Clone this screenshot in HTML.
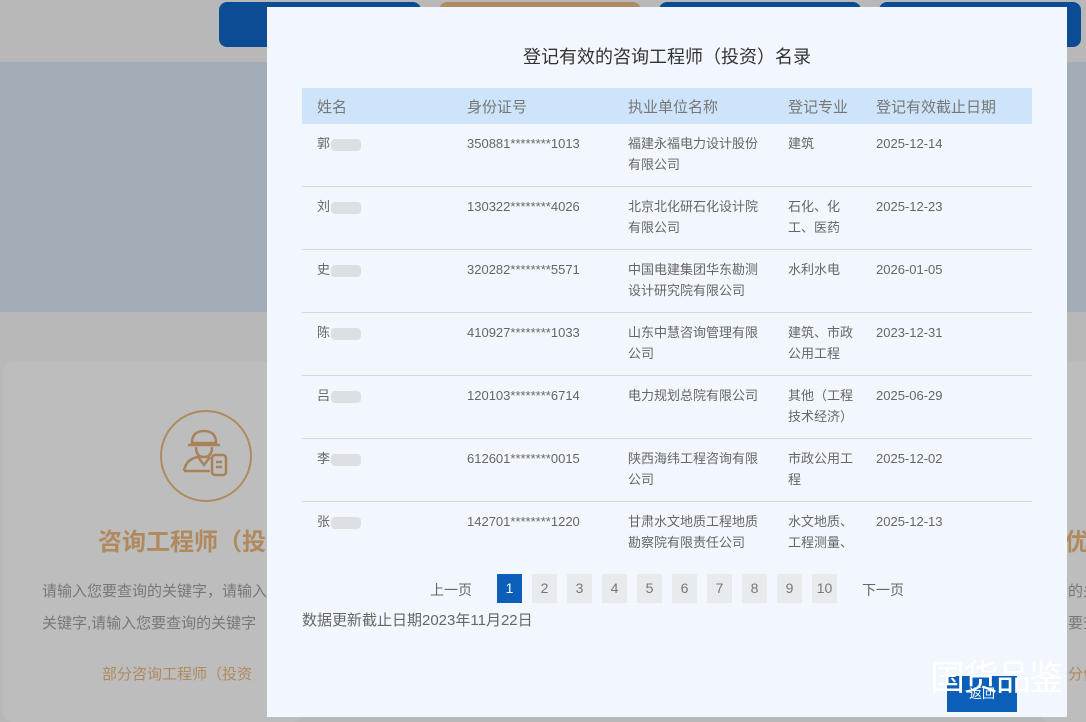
<!DOCTYPE html>
<html><head><meta charset="utf-8"><style>
*{margin:0;padding:0;box-sizing:border-box}
body{width:1086px;height:712px;overflow:hidden;position:relative;background:#b8b8b8;font-family:"Liberation Sans","Noto Sans CJK SC",sans-serif}
.abs{position:absolute}
.btn{position:absolute;top:2px;height:45px;width:202px;border-radius:8px;background:#0b4c94}
.card{position:absolute;top:362px;height:360px;background:#bdbdbd;border-radius:10px}
.modal{position:absolute;left:267px;top:7px;width:800px;height:710px;background:#f1f7fd}
.title{position:absolute;top:36px;left:0;width:100%;text-align:center;font-size:18px;color:#333}
.thead{position:absolute;left:35px;top:81px;width:730px;height:36px;background:#cde4fa;color:#777;font-size:15px}
.thead span,.row span{position:absolute}
.row{position:absolute;left:35px;width:730px;height:63px;border-bottom:1px solid #d6d9dc;color:#666;font-size:13px;line-height:21px;overflow:hidden}
.c1{left:15px}.c2{left:165px}.c3{left:326px;width:134px}.c4{left:486px;width:70px}.c5{left:574px}
.thead span{top:8px;width:auto;white-space:nowrap}
.row span{top:9px}
.blur{display:inline-block;width:30px;height:12px;background:#dcdfe3;vertical-align:middle;border-radius:4px;margin-left:1px}
.pg{position:absolute;top:567px;height:29px;width:25px;background:#e8ebee;color:#777;font-size:14px;text-align:center;line-height:29px}
.nw{white-space:nowrap;overflow:hidden}
</style></head><body>
<div class="abs" style="left:0;top:62px;width:1086px;height:250px;background:#a3adb8"></div>
<div class="btn" style="left:219px"></div>
<div class="btn" style="left:439px;background:#b08a62"></div>
<div class="btn" style="left:659px"></div>
<div class="btn" style="left:879px"></div>
<div class="card" style="left:3px;width:300px"></div>
<div class="card" style="left:1040px;width:60px"></div>
<div class="abs" style="left:160px;top:410px;width:92px;height:92px;border:2px solid #b08a5e;border-radius:50%"></div>
<svg class="abs" style="left:180px;top:425px" width="52" height="55" viewBox="0 0 52 55" fill="none" stroke="#a8835a" stroke-width="2.5"><path d="M12 18 Q12 6 24 6 Q36 6 36 18 Z M8 20 H40 M16 22 Q16 32 24 32 Q32 32 32 22 M4 46 Q6 34 18 32 L24 40 L30 32 M4 46 H30"/><rect x="32" y="30" width="14" height="20" rx="3"/><path d="M36 37h6M36 42h6"/></svg>
<div class="abs nw" style="left:98px;top:522px;font-size:24px;font-weight:bold;color:#b08a5e">咨询工程师（投</div>
<div class="abs nw" style="left:42px;top:576px;font-size:15px;color:#777;line-height:32px;width:225px">请输入您要查询的关键字，请输入<br>关键字,请输入您要查询的关键字</div>
<div class="abs nw" style="left:102px;top:663px;font-size:15px;color:#b08a5e">部分咨询工程师（投资</div>
<div class="abs nw" style="left:1065px;top:522px;font-size:24px;font-weight:bold;color:#b08a5e;width:21px">优</div>
<div class="abs nw" style="left:1068px;top:576px;font-size:15px;color:#777;line-height:32px;width:18px">的关<br>要查</div>
<div class="abs nw" style="left:1068px;top:663px;font-size:15px;color:#b08a5e;width:18px">分优</div>
<div class="modal">
<div class="title">登记有效的咨询工程师（投资）名录</div>
<div class="thead"><span class="c1">姓名</span><span class="c2">身份证号</span><span class="c3">执业单位名称</span><span class="c4">登记专业</span><span class="c5">登记有效截止日期</span></div>
<div class="row" style="top:117px"><span class="c1">郭<i class="blur"></i></span><span class="c2">350881********1013</span><span class="c3">福建永福电力设计股份有限公司</span><span class="c4">建筑</span><span class="c5">2025-12-14</span></div>
<div class="row" style="top:180px"><span class="c1">刘<i class="blur"></i></span><span class="c2">130322********4026</span><span class="c3">北京北化研石化设计院有限公司</span><span class="c4">石化、化工、医药</span><span class="c5">2025-12-23</span></div>
<div class="row" style="top:243px"><span class="c1">史<i class="blur"></i></span><span class="c2">320282********5571</span><span class="c3">中国电建集团华东勘测设计研究院有限公司</span><span class="c4">水利水电</span><span class="c5">2026-01-05</span></div>
<div class="row" style="top:306px"><span class="c1">陈<i class="blur"></i></span><span class="c2">410927********1033</span><span class="c3">山东中慧咨询管理有限公司</span><span class="c4">建筑、市政公用工程</span><span class="c5">2023-12-31</span></div>
<div class="row" style="top:369px"><span class="c1">吕<i class="blur"></i></span><span class="c2">120103********6714</span><span class="c3">电力规划总院有限公司</span><span class="c4">其他（工程技术经济）</span><span class="c5">2025-06-29</span></div>
<div class="row" style="top:432px"><span class="c1">李<i class="blur"></i></span><span class="c2">612601********0015</span><span class="c3">陕西海纬工程咨询有限公司</span><span class="c4">市政公用工程</span><span class="c5">2025-12-02</span></div>
<div class="row" style="top:495px;height:51px;border:none"><span class="c1">张<i class="blur"></i></span><span class="c2">142701********1220</span><span class="c3">甘肃水文地质工程地质勘察院有限责任公司</span><span class="c4">水文地质、工程测量、</span><span class="c5">2025-12-13</span></div>
<div class="abs" style="left:163px;top:573px;font-size:14px;color:#666">上一页</div>
<div class="pg" style="left:230px;background:#0b5fb8;color:#fff">1</div>
<div class="pg" style="left:265px">2</div><div class="pg" style="left:300px">3</div><div class="pg" style="left:335px">4</div><div class="pg" style="left:370px">5</div><div class="pg" style="left:405px">6</div><div class="pg" style="left:440px">7</div><div class="pg" style="left:475px">8</div><div class="pg" style="left:510px">9</div><div class="pg" style="left:545px">10</div>
<div class="abs" style="left:595px;top:573px;font-size:14px;color:#666">下一页</div>
<div class="abs" style="left:35px;top:602px;font-size:15px;color:#666">数据更新截止日期2023年11月22日</div>
<div class="abs" style="left:680px;top:669px;width:70px;height:36px;background:#0b5fb8;color:#fff;font-size:13px;text-align:center;line-height:36px">返回</div>
<div class="abs nw" style="left:663px;top:643px;font-size:35px;color:#fff;letter-spacing:-2px;width:133px">国货品鉴</div>
</div>
</body></html>
